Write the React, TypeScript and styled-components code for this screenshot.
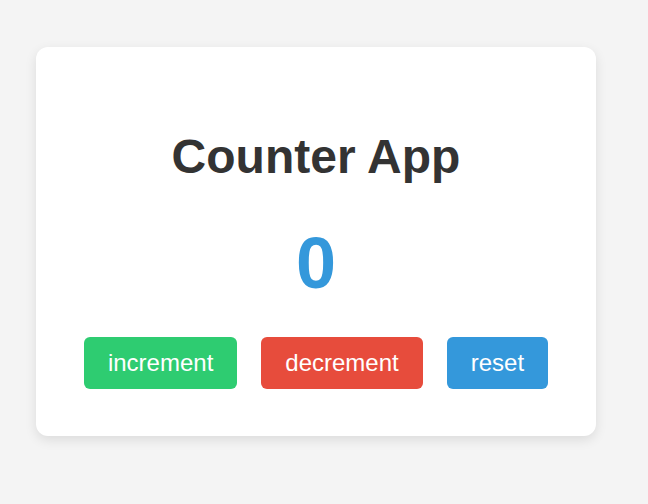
import { useState } from 'react';
import styled, { createGlobalStyle, css } from 'styled-components';

const GlobalStyle = createGlobalStyle`
  html, body {
    margin: 0;
    padding: 0;
    background: #f4f4f4;
    font-family: "Liberation Sans", Arial, sans-serif;
  }
`;

const Page = styled.div`
  display: flex;
  align-items: flex-start;
  justify-content: flex-start;
  padding: 47px 0 0 36px;
  min-height: 457px;
`;

const Card = styled.div`
  width: 560px;
  box-sizing: border-box;
  padding: 50px 40px 47px;
  background: #ffffff;
  border-radius: 12px;
  box-shadow: 0 4px 12px rgba(0, 0, 0, 0.1);
  display: flex;
  flex-direction: column;
  align-items: center;
`;

const Title = styled.h1`
  margin: 32px 0 0;
  font-size: 48px;
  font-weight: bold;
  color: #333333;
`;

const Count = styled.div`
  margin: 38px 0 33px;
  font-size: 72px;
  font-weight: bold;
  color: #3498db;
`;

const ButtonRow = styled.div`
  display: flex;
  gap: 24px;
`;

type Variant = 'increment' | 'decrement' | 'reset';

const colors: Record<Variant, string> = {
  increment: '#2ecc71',
  decrement: '#e74c3c',
  reset: '#3498db',
};

const ActionButton = styled.button<{ $variant: Variant }>(
  ({ $variant }) => css`
    padding: 12px 24px;
    border: none;
    border-radius: 6px;
    background: ${colors[$variant]};
    color: #ffffff;
    font-family: "Liberation Sans", Arial, sans-serif;
    font-size: 24px;
    line-height: normal;
    cursor: pointer;
  `
);

export default function App() {
  const [count, setCount] = useState(0);

  return (
    <>
      <GlobalStyle />
      <Page>
        <Card>
          <Title>Counter App</Title>
          <Count>{count}</Count>
          <ButtonRow>
            <ActionButton $variant="increment" onClick={() => setCount((c) => c + 1)}>
              increment
            </ActionButton>
            <ActionButton $variant="decrement" onClick={() => setCount((c) => c - 1)}>
              decrement
            </ActionButton>
            <ActionButton $variant="reset" onClick={() => setCount(0)}>
              reset
            </ActionButton>
          </ButtonRow>
        </Card>
      </Page>
    </>
  );
}
